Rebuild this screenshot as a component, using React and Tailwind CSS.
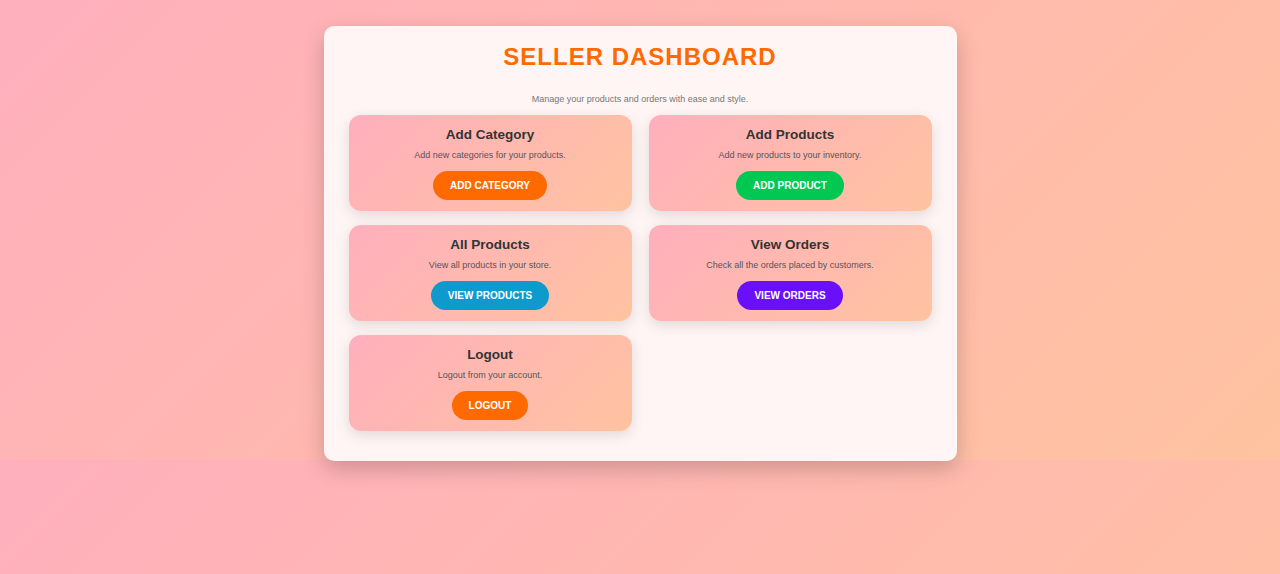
const actions = [
  {
    title: "Add Category",
    text: "Add new categories for your products.",
    label: "ADD CATEGORY",
    color: "bg-[#ff6a00]",
  },
  {
    title: "Add Products",
    text: "Add new products to your inventory.",
    label: "ADD PRODUCT",
    color: "bg-[#00c853]",
  },
  {
    title: "All Products",
    text: "View all products in your store.",
    label: "VIEW PRODUCTS",
    color: "bg-[#0f9acd]",
  },
  {
    title: "View Orders",
    text: "Check all the orders placed by customers.",
    label: "VIEW ORDERS",
    color: "bg-[#6a0ffa]",
  },
  {
    title: "Logout",
    text: "Logout from your account.",
    label: "LOGOUT",
    color: "bg-[#ff6a00]",
  },
];

function ActionCard({ title, text, label, color }) {
  return (
    <div className="flex flex-col items-center rounded-[12px] bg-[linear-gradient(135deg,#ffafbd,#ffc3a0)] pt-[10px] pb-[11px] shadow-[0_4px_14px_rgba(0,0,0,0.12)]">
      <h3 className="text-[13.5px] leading-[20px] font-bold text-[#333]">{title}</h3>
      <p className="mt-[4px] text-[9px] leading-[12px] text-[#555]">{text}</p>
      <button
        className={`mt-[10px] h-[29px] rounded-full px-[17px] text-[10px] font-bold text-white ${color}`}
      >
        {label}
      </button>
    </div>
  );
}

export default function App() {
  return (
    <div className="min-h-screen bg-[linear-gradient(135deg,#ffafbd,#ffc3a0)] bg-[length:100%_460px] font-['Liberation_Sans',Arial,sans-serif]">
      <div className="flex justify-center pt-[26px]">
        <div className="w-[633px] rounded-[10px] bg-[#fff5f4] px-[25px] pt-[13px] pb-[30px] shadow-[0_8px_22px_rgba(0,0,0,0.2)]">
          <h1 className="text-center text-[24px] leading-[36px] font-bold tracking-[1px] text-[#ff6a00]">
            SELLER DASHBOARD
          </h1>
          <p className="mt-[17px] text-center text-[9px] leading-[14px] text-[#777]">
            Manage your products and orders with ease and style.
          </p>
          <div className="mt-[9px] grid grid-cols-2 gap-x-[17px] gap-y-[14px]">
            {actions.map((a) => (
              <ActionCard key={a.title} {...a} />
            ))}
          </div>
        </div>
      </div>
    </div>
  );
}
